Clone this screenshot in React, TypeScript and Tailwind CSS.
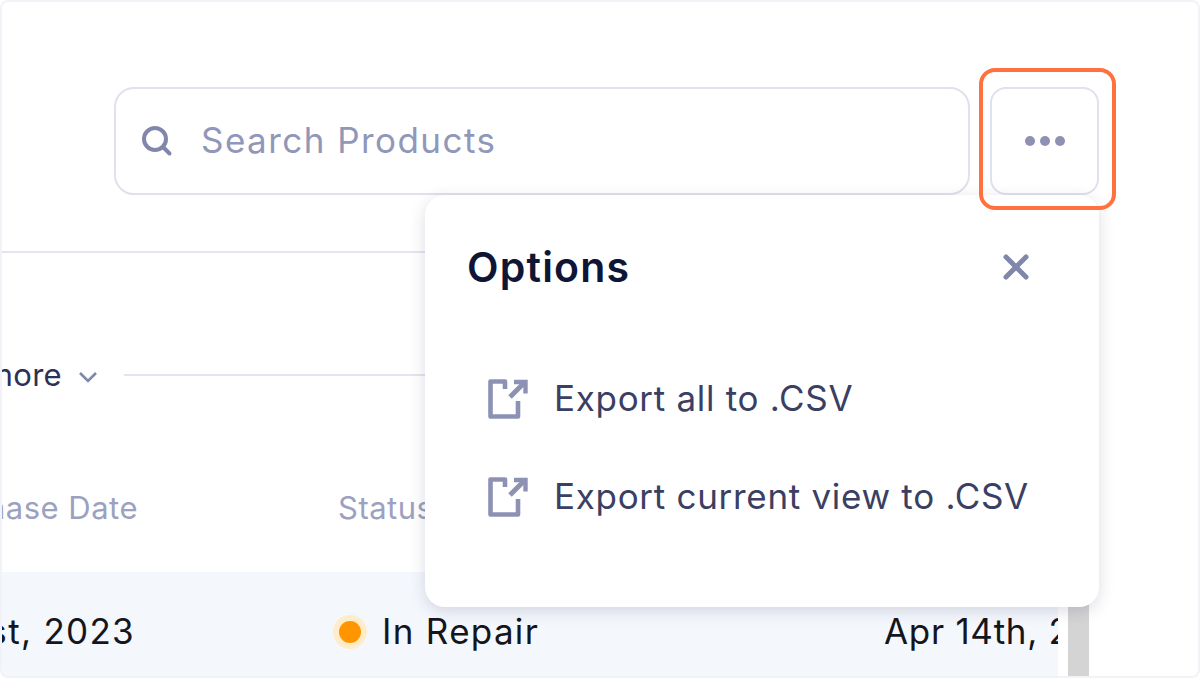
import { X } from 'lucide-react'

function ExportIcon() {
  return (
    <svg className="w-10 h-10 shrink-0 text-[#8d92b5]" viewBox="0 0 40 40" fill="none" stroke="currentColor" strokeWidth="4.6">
      <path d="M17 10V2.5H2.5v35H30V22" strokeLinejoin="round" />
      <path d="M22 18L36 4" strokeWidth="5" />
      <path d="M26 3h11.5v11.5" strokeWidth="4.4" />
    </svg>
  )
}

function SearchIcon() {
  return (
    <svg className="w-8 h-8 shrink-0 text-[#8187ab]" viewBox="0 0 32 32" fill="none" stroke="currentColor" strokeWidth="4" strokeLinecap="round">
      <circle cx="14" cy="14" r="11" />
      <path d="M23 23l5.5 5.5" />
    </svg>
  )
}

export default function App() {
  return (
    <div className="relative w-[1200px] h-[678px] overflow-hidden bg-white border-2 border-[#f2f2f8] rounded-lg font-['Inter',sans-serif]">
      {/* top bar */}
      <div className="flex gap-[20px] pl-[112px] pr-[99px] pt-[85px]">
        <div className="flex-1 h-[108px] flex items-center gap-[28px] pl-[25px] rounded-[20px] border-2 border-[#dfe1ec]">
          <SearchIcon />
          <span className="text-[35px] tracking-[1.45px] leading-[50px] mb-[2px] text-[#9197b9]">Search Products</span>
        </div>
        <div className="w-[109px] h-[108px] flex items-center justify-center gap-[5px] rounded-[16px] border-2 border-[#dfe1ec]">
          <span className="w-[10px] h-[10px] rounded-full bg-[#8d92b5]" />
          <span className="w-[10px] h-[10px] rounded-full bg-[#8d92b5]" />
          <span className="w-[10px] h-[10px] rounded-full bg-[#8d92b5]" />
        </div>
      </div>

      <div className="h-[2px] mt-[56px] mr-[99px] bg-[#e2e4ee]" />

      {/* filters */}
      <div className="flex items-center h-[60px] mt-[92px]">
        <div className="w-[60px] flex justify-end overflow-hidden shrink-0">
          <span className="text-[31px] tracking-[0.3px] whitespace-nowrap text-[#2c3158]">Show more</span>
        </div>
        <svg className="w-5 h-5 ml-[16px] mt-[4px] shrink-0 text-[#8187ab]" viewBox="0 0 20 20" fill="none" stroke="currentColor" strokeWidth="2.6">
          <path d="M2 6l8 8 8-8" />
        </svg>
        <div className="flex-1 h-[2px] ml-[26px] mr-[100px] bg-[#e2e4ee]" />
      </div>

      {/* table head */}
      <div className="flex items-center h-[60px] mt-[73px] text-[31px] tracking-[0.5px] text-[#9ca1c0]">
        <div className="w-[136px] flex justify-end overflow-hidden shrink-0">
          <span className="whitespace-nowrap">Purchase Date</span>
        </div>
        <span className="ml-[200px]">Status</span>
      </div>

      {/* table row */}
      <div className="flex items-center h-[106px] w-[1056px] mt-[34px] pt-[13px] overflow-hidden bg-[#f4f7fc] text-[35px] tracking-[1.3px] text-[#15161c]">
        <div className="w-[133px] flex justify-end overflow-hidden shrink-0">
          <span className="whitespace-nowrap">Aug 1st, 2023</span>
        </div>
        <div className="w-[750px] ml-[198px] flex items-center shrink-0">
          <span className="w-[34px] h-[34px] rounded-full bg-[#ffecca] flex items-center justify-center">
            <span className="w-[22px] h-[22px] rounded-full bg-[#ff9500]" />
          </span>
          <span className="ml-[15px]">In Repair</span>
        </div>
        <span className="whitespace-nowrap -ml-[199px] tracking-[0.7px]">Apr 14th, 2023</span>
      </div>

      {/* scrollbar */}
      <div className="absolute left-[1066px] top-[560px] w-[21px] h-[120px] bg-[#d4d4d4]" />

      {/* options popover */}
      <div className="absolute left-[423px] top-[193px] w-[674px] h-[412px] bg-white rounded-[20px] shadow-[0_4px_16px_rgba(40,45,90,0.16)] pl-[42px] pr-[63px] pt-[46px]">
        <div className="flex items-center justify-between h-[52px]">
          <span className="text-[41px] tracking-[1.2px] leading-[52px] font-semibold text-[#0f1535]">Options</span>
          <X className="w-10 h-10 text-[#8187ab]" strokeWidth={3} />
        </div>
        <div className="flex flex-col gap-[58px] mt-[86px] pl-[21px] text-[35px] tracking-[0.7px] text-[#3a3f63]">
          <div className="flex items-center gap-[26px] h-[40px]">
            <ExportIcon />
            <span className="whitespace-nowrap leading-[44px] mb-[2px]">Export all to .CSV</span>
          </div>
          <div className="flex items-center gap-[26px] h-[40px]">
            <ExportIcon />
            <span className="whitespace-nowrap leading-[44px] mb-[2px]">Export current view to .CSV</span>
          </div>
        </div>
      </div>

      {/* highlight around the options button */}
      <div className="absolute left-[977px] top-[66px] w-[137px] h-[142px] rounded-[16px] border-[4px] border-[#ff7240]" />
    </div>
  )
}
